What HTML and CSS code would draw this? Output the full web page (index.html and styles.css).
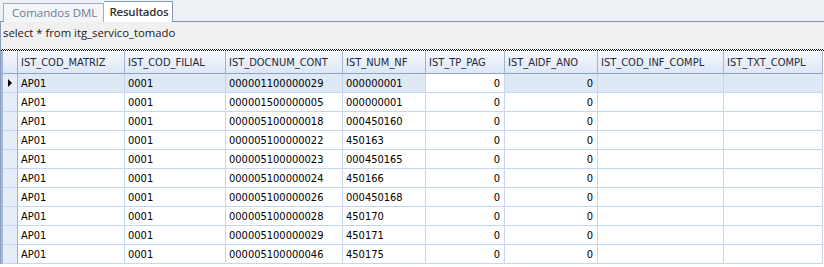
FILE: index.html
```html
<html>
<head>
    <title>Resultados</title>
    <link rel="stylesheet" href="styles.css">
</head>
<body>
    <div class="tabs">
        <div class="tab">Comandos DML</div>
        <div class="tab active">Resultados</div>
    </div>

    <div class="panel">
        <div class="query">select * from itg_servico_tomado</div>
        <div class="splitter"></div>

        <div class="grid">
            <div class="hd rh"></div>
            <div class="hd">IST_COD_MATRIZ</div>
            <div class="hd">IST_COD_FILIAL</div>
            <div class="hd">IST_DOCNUM_CONT</div>
            <div class="hd">IST_NUM_NF</div>
            <div class="hd">IST_TP_PAG</div>
            <div class="hd">IST_AIDF_ANO</div>
            <div class="hd">IST_COD_INF_COMPL</div>
            <div class="hd">IST_TXT_COMPL</div>
        </div>
        <div class="grid" id="rows"></div>
    </div>

    <script>
        var data = [
            ["000001100000029", "000000001"],
            ["000001500000005", "000000001"],
            ["000005100000018", "000450160"],
            ["000005100000022", "450163"],
            ["000005100000023", "000450165"],
            ["000005100000024", "450166"],
            ["000005100000026", "000450168"],
            ["000005100000028", "450170"],
            ["000005100000029", "450171"],
            ["000005100000046", "450175"]
        ];

        var rows = document.getElementById("rows");
        var html = "";
        for (var i = 0; i < data.length; i++)
        {
            var sel = i == 0 ? " sel" : "";
            html += '<div class="rh' + sel + '">' + (i == 0 ? '<span class="arrow"></span>' : '') + '</div>';
            html += '<div class="cell' + sel + '">AP01</div>';
            html += '<div class="cell' + sel + '">0001</div>';
            html += '<div class="cell' + sel + '">' + data[i][0] + '</div>';
            html += '<div class="cell' + sel + '">' + data[i][1] + '</div>';
            html += '<div class="cell num' + (i == 0 ? " focus" : "") + '">0</div>';
            html += '<div class="cell num' + sel + '">0</div>';
            html += '<div class="cell' + sel + '"></div>';
            html += '<div class="cell' + sel + '"></div>';
        }
        rows.innerHTML = html;
    </script>
</body>
</html>
```

FILE: styles.css
```css
* {
    margin: 0px;
    padding: 0px;
    box-sizing: border-box;
}

body
{
    width: 824px;
    height: 267px;
    overflow: hidden;
    background-color: #ffffff;
}

.tabs
{
    height: 22px;
    display: flex;
    align-items: flex-end;
    padding-left: 3px;
    background-color: #edf0f4;
    border-bottom: 1px solid #8290a4;
    font-family: "Open Sans", "Noto Sans", sans-serif;
    font-size: 11.5px;
}

.tab
{
    height: 19px;
    margin-bottom: -1px;
    padding: 0px 6px 0px 8px;
    line-height: 17px;
    color: #6f7b8c;
    background-color: #f3f5f8;
    border: 1px solid #a3adbd;
    border-bottom: none;
}

.tab.active
{
    height: 21px;
    padding: 1px 4px 0px 5px;
    color: #333333;
    font-weight: 600;
    letter-spacing: -0.2px;
    background-color: #ffffff;
    border-color: #8797ad;
    border-left: none;
}

.panel
{
    border-left: 1px solid #8a9dbf;
}

.query
{
    height: 27px;
    padding: 3px 0px 0px 2px;
    background-color: #f0f0f0;
    font-family: "Open Sans", "Noto Sans", sans-serif;
    font-size: 11.3px;
    color: #1b1b1b;
}

.splitter
{
    height: 2px;
    background: repeating-conic-gradient(#000000 0 25%, #ffffff 0 50%) 0 0 / 2px 2px;
}

.grid
{
    display: grid;
    grid-template-columns: 15px 107px 101px 117px 83px 79px 93px 126px 99px;
    border-left: 2px solid #a6b7d4;
    font-family: "DejaVu Sans Condensed", "DejaVu Sans", sans-serif;
    font-size: 11px;
    color: #000000;
}

.hd
{
    height: 23px;
    padding: 5px 0px 0px 3px;
    color: #1e2a3c;
    background: linear-gradient(#f6f9fd, #dde7f5);
    border-right: 1px solid #a2b4d2;
    border-bottom: 1px solid #8fa3c4;
    white-space: nowrap;
    overflow: hidden;
}

.rh
{
    height: 19px;
    background-color: #e6edf8;
    border-right: 1px solid #9fb2d2;
    border-bottom: 1px solid #c4d4ec;
    display: flex;
    align-items: center;
    justify-content: center;
}

.hd.rh
{
    height: 23px;
    background: linear-gradient(#f6f9fd, #dde7f5);
    border-bottom: 1px solid #8fa3c4;
}

.arrow
{
    width: 0px;
    height: 0px;
    border-top: 4px solid transparent;
    border-bottom: 4px solid transparent;
    border-left: 4px solid #000000;
}

.cell
{
    height: 19px;
    padding: 3px 0px 0px 3px;
    background-color: #ffffff;
    border-right: 1px solid #c4d6f0;
    border-bottom: 1px solid #c4d6f0;
    white-space: nowrap;
    overflow: hidden;
}

.cell.num
{
    text-align: right;
    padding-right: 4px;
}

.cell.sel
{
    background-color: #dfe8f5;
}

.cell.focus
{
    background-color: #ffffff;
}
```
